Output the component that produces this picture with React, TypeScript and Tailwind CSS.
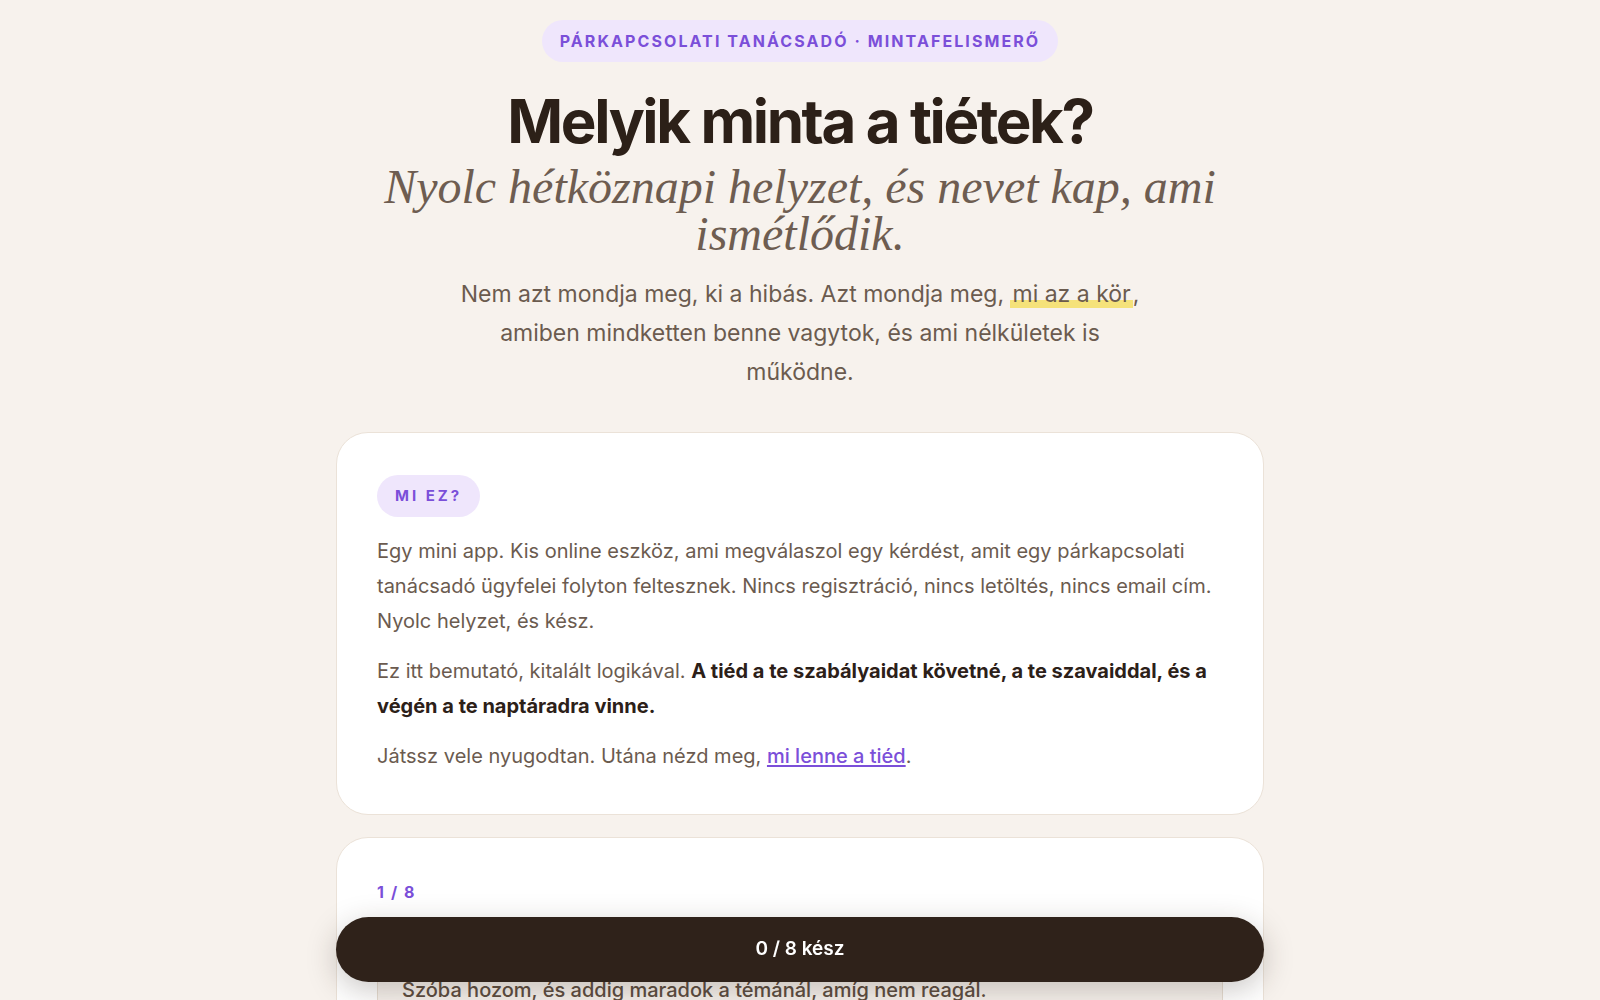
import { useState } from 'react';

const options = [
    'Szóba hozom, és addig maradok a témánál, amíg nem reagál.',
    'Inkább hallgatok, és megvárom, hogy magától észrevegye.',
    'Viccel elütöm, aztán később mégis felhozom.',
    'Elmegyek otthonról egy kicsit, hogy lehiggadjak.',
];

export default function App() {
    const [done] = useState(0);

    return (
        <div className="min-h-screen bg-[#f7f2ed] font-['Inter',sans-serif] text-[#6b5b4f] pb-40">
            <main className="mx-auto flex max-w-[928px] flex-col items-center pt-5">
                {/* Top badge */}
                <div className="rounded-full bg-[#efe6fc] px-[18px] py-[10px] text-[16px] font-bold uppercase leading-[22px] tracking-[0.13em] text-[#7b4fd9]">
                    Párkapcsolati tanácsadó · Mintafelismerő
                </div>

                {/* Hero */}
                <h1 className="mt-[29px] text-[60px] font-bold leading-none tracking-[-0.04em] text-[#2c2018]">
                    Melyik minta a tiétek?
                </h1>
                <p className="mt-3 max-w-[880px] text-center font-['Liberation_Serif',serif] text-[48px] italic leading-[47px] text-[#6e5d51]">
                    Nyolc hétköznapi helyzet, és nevet kap, ami ismétlődik.
                </p>
                <p className="mt-[18px] max-w-[690px] text-center text-[23px] leading-[39px]">
                    Nem azt mondja meg, ki a hibás. Azt mondja meg,{' '}
                    <span className="bg-[linear-gradient(transparent_72%,#f5e27a_72%)] px-[2px]">mi az a kör</span>,
                    amiben mindketten benne vagytok, és ami nélkületek is működne.
                </p>

                {/* What is this */}
                <section className="mt-10 w-full rounded-[32px] border border-[#ebe2d8] bg-white px-10 pt-[42px] pb-10">
                    <span className="inline-block rounded-full bg-[#efe6fc] px-[18px] py-[10px] text-[15px] font-bold uppercase leading-[22px] tracking-[0.2em] text-[#7b4fd9]">
                        Mi ez?
                    </span>
                    <div className="mt-[17px] space-y-[15px] text-[20px] leading-[35px]">
                        <p>
                            Egy mini app. Kis online eszköz, ami megválaszol egy kérdést, amit egy párkapcsolati
                            tanácsadó ügyfelei folyton feltesznek. Nincs regisztráció, nincs letöltés, nincs email cím.
                            Nyolc helyzet, és kész.
                        </p>
                        <p>
                            Ez itt bemutató, kitalált logikával.{' '}
                            <strong className="font-bold text-[#2c2018]">
                                A tiéd a te szabályaidat követné, a te szavaiddal, és a végén a te naptáradra vinne.
                            </strong>
                        </p>
                        <p>
                            Játssz vele nyugodtan. Utána nézd meg,{' '}
                            <a href="#sajat" className="font-medium text-[#7b4fd9] underline underline-offset-2">
                                mi lenne a tiéd
                            </a>
                            .
                        </p>
                    </div>
                </section>

                {/* Question 1 */}
                <section className="mt-[22px] w-full rounded-[32px] border border-[#ebe2d8] bg-white p-10">
                    <div className="text-[16px] font-bold leading-7 tracking-[0.1em] text-[#7b4fd9]">1 / 8</div>
                    <h2 className="mt-2 font-['Liberation_Serif',serif] text-[26px] leading-[32px] text-[#2c2018]">
                        Valami zavar benneteket. Mit csinálsz?
                    </h2>
                    <div className="mt-3 flex flex-col gap-3">
                        {options.map((o) => (
                            <button
                                key={o}
                                className="w-full rounded-2xl border border-[#e6ddd2] bg-[#f7f2ed] px-6 py-[17px] text-left text-[20px] font-medium leading-7 text-[#5d4d41]"
                            >
                                {o}
                            </button>
                        ))}
                    </div>
                </section>
            </main>

            {/* Progress bar */}
            <div className="fixed bottom-[18px] left-1/2 flex h-[65px] w-[928px] -translate-x-1/2 items-center justify-center rounded-full bg-[#2f221a] text-[19px] font-semibold text-white shadow-[0_8px_30px_rgba(47,34,26,0.25)]">
                {done} / 8 kész
            </div>
        </div>
    );
}
